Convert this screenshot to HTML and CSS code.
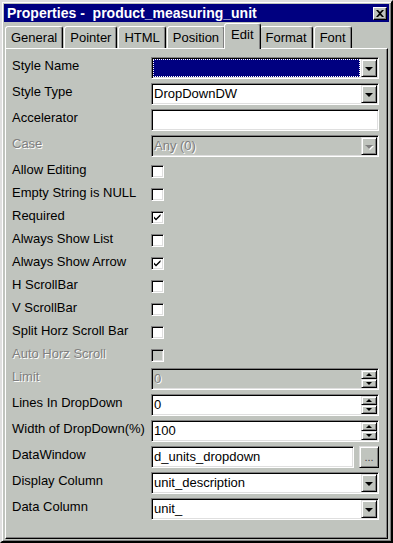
FILE: index.html
```html
<!DOCTYPE html>
<html>
<head>
    <title>Properties - product_measuring_unit</title>
    <link rel="stylesheet" href="styles.css">
</head>
<body>
    <div class="window">
        <div class="titlebar">
            <span class="title">Properties -&nbsp; product_measuring_unit</span>
            <div class="close">
                <svg width="8" height="7" viewBox="0 0 8 7"><path d="M0 0h2l2 2 2-2h2L5 3.5 8 7H6L4 5 2 7H0l3-3.5z" fill="#000"/></svg>
            </div>
        </div>
        <div class="tabs">
            <div class="tab">General</div>
            <div class="tab">Pointer</div>
            <div class="tab">HTML</div>
            <div class="tab">Position</div>
            <div class="tab active">Edit</div>
            <div class="tab">Format</div>
            <div class="tab">Font</div>
        </div>
        <div class="panel">
            <div class="row">
                <div class="label">Style Name</div>
                <div class="field">
                    <div class="value selected"></div>
                    <div class="drop"><span class="arrow"></span></div>
                </div>
            </div>
            <div class="row">
                <div class="label">Style Type</div>
                <div class="field">
                    <div class="value">DropDownDW</div>
                    <div class="drop"><span class="arrow"></span></div>
                </div>
            </div>
            <div class="row">
                <div class="label">Accelerator</div>
                <div class="field">
                    <div class="value"></div>
                </div>
            </div>
            <div class="row">
                <div class="label disabled">Case</div>
                <div class="field disabled">
                    <div class="value">Any (0)</div>
                    <div class="drop"><span class="arrow"></span></div>
                </div>
            </div>

            <div class="row check-row">
                <div class="label">Allow Editing</div>
                <div class="checkbox"></div>
            </div>
            <div class="row check-row">
                <div class="label">Empty String is NULL</div>
                <div class="checkbox"></div>
            </div>
            <div class="row check-row">
                <div class="label">Required</div>
                <div class="checkbox checked"><svg width="9" height="9" viewBox="0 0 9 9"><path d="M1 3.5l2 2 4.5-4.5v2l-4.5 4.5-2-2z" fill="#000"/></svg></div>
            </div>
            <div class="row check-row">
                <div class="label">Always Show List</div>
                <div class="checkbox"></div>
            </div>
            <div class="row check-row">
                <div class="label">Always Show Arrow</div>
                <div class="checkbox checked"><svg width="9" height="9" viewBox="0 0 9 9"><path d="M1 3.5l2 2 4.5-4.5v2l-4.5 4.5-2-2z" fill="#000"/></svg></div>
            </div>
            <div class="row check-row">
                <div class="label">H ScrollBar</div>
                <div class="checkbox"></div>
            </div>
            <div class="row check-row">
                <div class="label">V ScrollBar</div>
                <div class="checkbox"></div>
            </div>
            <div class="row check-row">
                <div class="label">Split Horz Scroll Bar</div>
                <div class="checkbox"></div>
            </div>
            <div class="row check-row">
                <div class="label disabled">Auto Horz Scroll</div>
                <div class="checkbox disabled"></div>
            </div>

            <div class="row">
                <div class="label disabled">Limit</div>
                <div class="field disabled">
                    <div class="value">0</div>
                    <div class="spin">
                        <div class="spin-btn"><span class="up"></span></div>
                        <div class="spin-btn"><span class="down"></span></div>
                    </div>
                </div>
            </div>
            <div class="row">
                <div class="label">Lines In DropDown</div>
                <div class="field">
                    <div class="value">0</div>
                    <div class="spin">
                        <div class="spin-btn"><span class="up"></span></div>
                        <div class="spin-btn"><span class="down"></span></div>
                    </div>
                </div>
            </div>
            <div class="row">
                <div class="label">Width of DropDown(%)</div>
                <div class="field">
                    <div class="value">100</div>
                    <div class="spin">
                        <div class="spin-btn"><span class="up"></span></div>
                        <div class="spin-btn"><span class="down"></span></div>
                    </div>
                </div>
            </div>
            <div class="row">
                <div class="label">DataWindow</div>
                <div class="browse">
                    <div class="field short">
                        <div class="value">d_units_dropdown</div>
                    </div>
                    <div class="dots">...</div>
                </div>
            </div>
            <div class="row">
                <div class="label">Display Column</div>
                <div class="field">
                    <div class="value">unit_description</div>
                    <div class="drop"><span class="arrow"></span></div>
                </div>
            </div>
            <div class="row">
                <div class="label">Data Column</div>
                <div class="field">
                    <div class="value">unit_</div>
                    <div class="drop"><span class="arrow"></span></div>
                </div>
            </div>
        </div>
    </div>
</body>
</html>
```

FILE: styles.css
```css
body {
    margin: 0;
    font-family: "Liberation Sans", Arial, sans-serif;
    font-size: 13px;
    background-color: #c0c4be;
}
.window {
    width: 393px;
    height: 543px;
    box-sizing: border-box;
    background: #c0c4be;
    border: 2px solid;
    border-color: #dfdfdf #000 #000 #dfdfdf;
    box-shadow: inset 1px 1px #fff, inset -1px -1px #808080;
    padding: 2px;
}
.titlebar {
    height: 18px;
    background: #000080;
    display: flex;
    align-items: center;
    justify-content: space-between;
    padding: 0 2px 0 3px;
}
.title {
    color: #fff;
    font-weight: bold;
    font-size: 14px;
    white-space: pre;
}
.close {
    width: 14px;
    height: 13px;
    box-sizing: border-box;
    background: #c0c4be;
    border: 1px solid;
    border-color: #fff #000 #000 #fff;
    box-shadow: inset -1px -1px #808080;
    display: flex;
    align-items: center;
    justify-content: center;
    margin-top: 1px;
}
.tabs {
    position: relative;
    z-index: 1;
    height: 26px;
    display: flex;
    align-items: flex-end;
    padding-left: 1px;
}
.tab {
    height: 22px;
    box-sizing: border-box;
    padding: 0 5px;
    line-height: 21px;
    border: 1px solid;
    border-bottom: none;
    border-color: #fff #000 transparent #fff;
    box-shadow: inset -1px 0 #808080;
    border-radius: 3px 3px 0 0;
    background: #c0c4be;
    margin-right: 1px;
}
.tab.active {
    height: 26px;
    position: relative;
    top: 1px;
    line-height: 22px;
    padding: 0 6px;
    margin: 0 -1px 0 -2px;
}
.panel {
    height: 491px;
    box-sizing: border-box;
    margin: 0 1px;
    border: 1px solid;
    border-color: #fff #000 #000 #fff;
    box-shadow: inset -1px -1px #808080;
    padding: 7px 8px 0 6px;
}
.row {
    display: flex;
    height: 26px;
}
.check-row {
    height: 23px;
}
.label {
    width: 139px;
    flex-shrink: 0;
    padding-top: 2px;
    line-height: 15px;
    white-space: nowrap;
}
.label.disabled,
.field.disabled .value {
    color: #808080;
    text-shadow: 1px 1px #fff;
}
.field {
    width: 228px;
    height: 22px;
    margin-top: 1px;
    box-sizing: border-box;
    border: 1px solid;
    border-color: #808080 #fff #fff #808080;
    box-shadow: inset 1px 1px #000, inset -1px -1px #dfdfdf;
    padding: 1px;
    background: #fff;
    display: flex;
}
.field.disabled {
    background: #c0c4be;
}
.field.short {
    width: 203px;
    margin-top: 0;
}
.value {
    flex: 1;
    padding-left: 1px;
    line-height: 18px;
    white-space: nowrap;
    overflow: hidden;
}
.value.selected {
    background: #000080;
    outline: 1px dotted #fff;
    outline-offset: -1px;
    margin-right: 1px;
}
.drop,
.spin-btn,
.dots {
    box-sizing: border-box;
    background: #c0c4be;
    border: 1px solid;
    border-color: #dfdfdf #000 #000 #dfdfdf;
    box-shadow: inset 1px 1px #fff, inset -1px -1px #808080;
    display: flex;
    align-items: center;
    justify-content: center;
}
.drop {
    width: 16px;
    height: 18px;
}
.arrow {
    width: 0;
    height: 0;
    border-left: 4px solid transparent;
    border-right: 4px solid transparent;
    border-top: 4px solid #000;
    margin-top: 1px;
}
.field.disabled .arrow {
    border-top-color: #808080;
    filter: drop-shadow(1px 1px 0 #fff);
}
.spin {
    width: 16px;
    display: flex;
    flex-direction: column;
}
.spin-btn {
    height: 9px;
}
.up,
.down {
    width: 0;
    height: 0;
    border-left: 3px solid transparent;
    border-right: 3px solid transparent;
}
.up {
    border-bottom: 3px solid #000;
}
.down {
    border-top: 3px solid #000;
}
.browse {
    display: flex;
    gap: 5px;
    margin-top: 1px;
}
.dots {
    width: 20px;
    height: 22px;
    font-size: 11px;
    line-height: 14px;
    color: #404040;
}
.checkbox {
    width: 13px;
    height: 13px;
    margin-top: 5px;
    box-sizing: border-box;
    border: 1px solid;
    border-color: #808080 #fff #fff #808080;
    box-shadow: inset 1px 1px #000, inset -1px -1px #dfdfdf;
    background: #fff;
    padding: 1px;
    display: flex;
}
.checkbox.disabled {
    background: #c0c4be;
}
```
